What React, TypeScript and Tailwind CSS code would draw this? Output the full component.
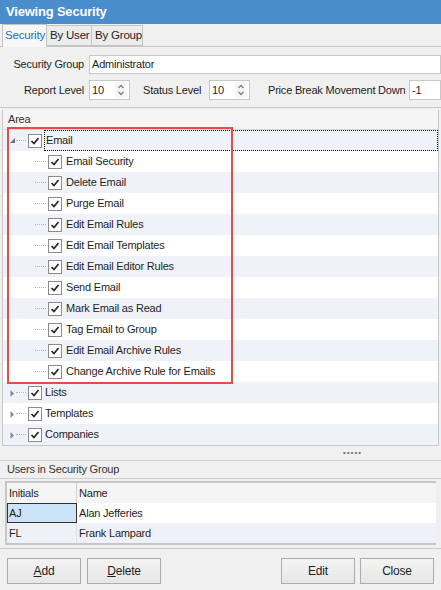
import React from "react";

// Viewing Security: DevExpress 風のセキュリティ設定ウィンドウ。
type Node = { label: string; level: 0 | 1; expanded?: boolean };

const NODES: Node[] = [
  { label: "Email", level: 0, expanded: true },
  { label: "Email Security", level: 1 },
  { label: "Delete Email", level: 1 },
  { label: "Purge Email", level: 1 },
  { label: "Edit Email Rules", level: 1 },
  { label: "Edit Email Templates", level: 1 },
  { label: "Edit Email Editor Rules", level: 1 },
  { label: "Send Email", level: 1 },
  { label: "Mark Email as Read", level: 1 },
  { label: "Tag Email to Group", level: 1 },
  { label: "Edit Email Archive Rules", level: 1 },
  { label: "Change Archive Rule for Emails", level: 1 },
  { label: "Lists", level: 0 },
  { label: "Templates", level: 0 },
  { label: "Companies", level: 0 },
];

const FONT = "font-['Tahoma','Liberation_Sans',sans-serif]";

export default function App() {
  return (
    <div
      className={`${FONT} relative h-[590px] w-[441px] overflow-hidden whitespace-nowrap bg-[#f0f0f0] text-[11px] tracking-[-0.2px] text-[#1e1e1e]`}
    >
      {/* title */}
      <div className="flex h-6 items-center bg-[#4a8dcc] pl-[6px] text-[13px] font-bold text-white">
        Viewing Security
      </div>

      {/* tabs */}
      <div className="flex h-[23px] items-end border-b border-[#c4c4c4] pl-[2px] text-[11.5px]">
        <div className="-mb-px flex h-[23px] w-[45px] items-center border border-b-0 border-[#c4c4c4] bg-[#f7f7f7] pl-[2px] text-[#1c6fc4]">
          Security
        </div>
        <div className="flex h-[21px] w-[45px] items-center border-y border-r border-[#c4c4c4] bg-[#ececec] pl-[3px]">
          By User
        </div>
        <div className="flex h-[21px] w-[51px] items-center border-y border-r border-[#c4c4c4] bg-[#ececec] pl-[3px]">
          By Group
        </div>
      </div>

      {/* form */}
      <div className="h-[61px] border-b border-[#c8c8c8] pt-[8px]">
        <div className="flex h-[18px] items-center">
          <span className="w-[89px] pr-[5px] text-right">Security Group</span>
          <div className="flex h-[19px] flex-1 items-center border border-[#c8c8c8] bg-white pl-[2px]">
            Administrator
          </div>
        </div>
        <div className="mt-[7px] flex h-[20px] items-center">
          <span className="w-[89px] pr-[5px] text-right">Report Level</span>
          <Spin value="10" />
          <span className="ml-[13px] w-[66px]">Status Level</span>
          <Spin value="10" />
          <span className="ml-[18px] w-[141px]">Price Break Movement Down</span>
          <div className="flex h-[20px] flex-1 items-center border border-[#c8c8c8] bg-white pl-[2px]">-1</div>
        </div>
      </div>

      {/* area tree */}
      <div className="mx-[2px] mt-[2px] border border-t-0 border-[#c8c8c8] bg-white">
        <div className="flex h-[20px] items-center border-b border-[#d8d8d8] bg-[#f5f5f5] pl-[5px] text-[#333]">
          Area
        </div>
        <div className="relative">
          {/* ドット線 */}
          <div className="absolute left-[9px] top-[10px] h-[294px] border-l border-dotted border-[#b8b8b8]" />
          <div className="absolute left-[31px] top-[21px] h-[221px] border-l border-dotted border-[#b8b8b8]" />
          {NODES.map((n, i) => (
            <TreeRow key={n.label} node={n} alt={i % 2 === 0} focused={i === 0} />
          ))}
          {/* 赤枠 (注釈) */}
          <div className="absolute left-[4px] top-[-3px] h-[257px] w-[226px] border-2 border-[#f24545]" />
        </div>
      </div>

      {/* splitter */}
      <div className="flex h-[14px] items-center justify-end pr-[79px]">
        <span className="text-[8px] leading-none tracking-[1px] text-[#707070]">•••••</span>
      </div>

      {/* users */}
      <div className="flex h-[19px] items-center border-y border-[#cfcfcf] pl-[7px] text-[#333]">
        Users in Security Group
      </div>
      <div className="mx-[5px] mt-[2px] border-2 border-r-0 border-[#c6c6c6] bg-white">
        <div className="flex h-[20px] items-center bg-[#f5f5f5]">
          <div className="h-full w-[70px] border-r border-[#d0d0d0] pl-[2px] leading-[20px]">Initials</div>
          <div className="pl-[2px]">Name</div>
        </div>
        <div className="flex h-[20px] items-center bg-white">
          <div className="h-full w-[70px] border border-[#3c2e22] bg-[#cce4f7] pl-[1px] leading-[18px]">AJ</div>
          <div className="pl-[2px]">Alan Jefferies</div>
        </div>
        <div className="flex h-[20px] items-center bg-[#eef2f8]">
          <div className="h-full w-[70px] border-r border-[#e0e0e0] pl-[2px] leading-[20px]">FL</div>
          <div className="pl-[2px]">Frank Lampard</div>
        </div>
      </div>

      {/* buttons */}
      <div className="mt-[3px] flex h-[44px] items-center border-t border-[#c8c8c8] px-[7px] text-[12px]">
        <Btn><u>A</u>dd</Btn>
        <div className="w-[6px]" />
        <Btn><u>D</u>elete</Btn>
        <div className="flex-1" />
        <Btn>Edit</Btn>
        <div className="w-[5px]" />
        <Btn>Close</Btn>
      </div>
    </div>
  );
}

function Spin({ value }: { value: string }) {
  return (
    <div className="flex h-[20px] w-[41px] items-center border border-[#c8c8c8] bg-white">
      <span className="flex-1 pl-[2px]">{value}</span>
      <svg width="12" height="16" viewBox="0 0 12 16" className="mr-[2px] bg-[#f7f7f7]">
        <path d="M3.5 6 L6 3.5 L8.5 6" fill="none" stroke="#808080" strokeWidth="1.3" />
        <path d="M3.5 10 L6 12.5 L8.5 10" fill="none" stroke="#808080" strokeWidth="1.3" />
      </svg>
    </div>
  );
}

function Check() {
  return (
    <span className="flex h-[14px] w-[14px] shrink-0 items-center justify-center border border-[#8c8c8c] bg-white">
      <svg width="10" height="10" viewBox="0 0 10 10">
        <path d="M1.5 5 L4 7.5 L8.5 2" fill="none" stroke="#262626" strokeWidth="1.7" />
      </svg>
    </span>
  );
}

function TreeRow({ node, alt, focused }: { node: Node; alt: boolean; focused: boolean }) {
  const top = node.level === 0;
  return (
    <div className={`relative flex h-[21px] items-center ${alt ? "bg-[#eff3f9]" : "bg-white"}`}>
      {top ? (
        <>
          <div className="absolute left-[13px] top-[10px] w-[10px] border-t border-dotted border-[#b8b8b8]" />
          <span className="absolute left-[6px] top-[7px]">
            {node.expanded ? (
              <svg width="7" height="7" viewBox="0 0 7 7">
                <path d="M6 1 L6 6 L1 6 Z" fill="#707070" />
              </svg>
            ) : (
              <svg width="7" height="9" viewBox="0 0 7 9">
                <path d="M1.5 1 L5 4.5 L1.5 8 Z" fill="#8a8a8a" />
              </svg>
            )}
          </span>
          <span className="ml-[25px]"><Check /></span>
          <span
            className={`ml-[2px] flex h-[21px] flex-1 items-center pl-px ${
              focused ? "border border-dotted border-[#111]" : ""
            }`}
          >
            {node.label}
          </span>
        </>
      ) : (
        <>
          <div className="absolute left-[32px] top-[10px] w-[11px] border-t border-dotted border-[#b8b8b8]" />
          <span className="ml-[45px]"><Check /></span>
          <span className="ml-[4px]">{node.label}</span>
        </>
      )}
    </div>
  );
}

function Btn({ children }: { children: React.ReactNode }) {
  return (
    <button
      type="button"
      className="flex h-[26px] w-[74px] items-center justify-center border border-[#acacac] bg-gradient-to-b from-[#f4f4f4] to-[#e6e6e6] text-[#1e1e1e]"
    >
      {children}
    </button>
  );
}
